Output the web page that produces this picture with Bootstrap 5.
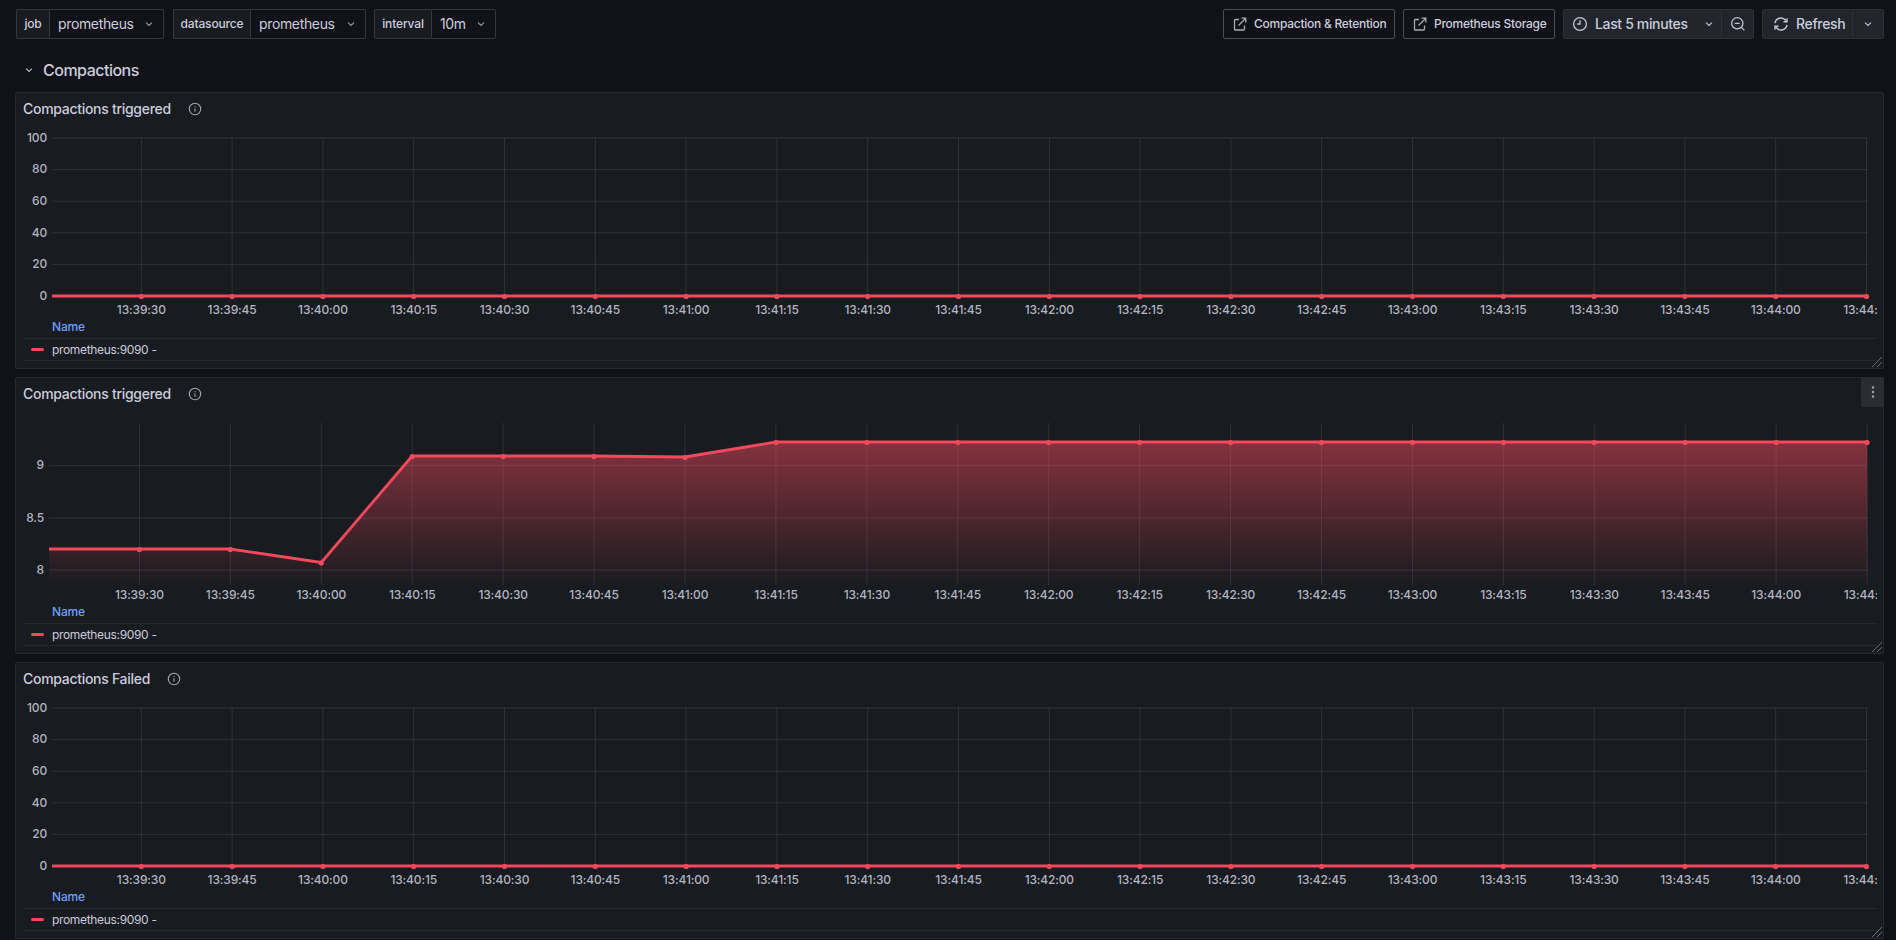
<!doctype html>
<html lang="en" data-bs-theme="dark">
<head>
<meta charset="utf-8">
<title>Compactions</title>
<link href="https://cdn.jsdelivr.net/npm/bootstrap@5.3.0/dist/css/bootstrap.min.css" rel="stylesheet">
<style>
html,body{height:940px;overflow:hidden}
body{background:#111217;color:#ccccdc;font-family:Inter,"Liberation Sans",sans-serif;font-size:12px;line-height:1.3}
.pagewrap{padding:9px 12px 0 15px}
.topbar{height:30px}
.varchip{height:30px}
.chip-a{margin-left:1px}
.chip-b{margin-left:9px}
.chip-c{margin-left:8px}
.varlabel{height:30px;display:flex;align-items:center;justify-content:center;background:#181b1f;border:1px solid #34373d;border-right:0;border-radius:2px 0 0 2px;font-weight:500;font-size:12px;letter-spacing:-.15px;color:#ccccdc}
.varvalue{height:30px;display:flex;align-items:center;justify-content:space-between;padding:0 8px;background:#111217;border:1px solid #34373d;border-radius:0 2px 2px 0;font-size:14px;letter-spacing:-.35px;color:#ccccdc}
.l-job{width:33px}.l-ds{width:77px}.l-int{width:57px}
.w-job{width:115px}.w-ds{width:116px}.w-int{width:65px}
.linkbtn{height:30px;display:flex;align-items:center;gap:6px;padding:0 0 0 8px;border:1px solid #4a4d53;border-radius:2px;background:transparent;color:#ccccdc;font-weight:500;font-size:12px;letter-spacing:-.26px}
.b-comp{width:172px}.b-prom{width:152px}
.toolseg{height:30px;display:flex;align-items:center;background:#22252b;border:1px solid #2e3136;color:#ccccdc;font-size:14px;font-weight:500;letter-spacing:-.35px}
.seg-left{border-radius:2px 0 0 2px;border-right:0}
.seg-right{border-radius:0 2px 2px 0}
.t-main{width:158px;padding-left:8px;gap:7px}
.t-zoom{width:33px}
.r-main{width:90px;padding-left:10px;gap:7px}
.r-drop{width:32px}
.sectionrow{height:30px;margin:16px 0 7px;display:flex;align-items:center;font-size:16px;font-weight:500;letter-spacing:-.5px;color:#ccccdc;padding-left:8px;gap:8px}
.panelbox{position:relative;height:277px;background:#181b1f;border:1px solid #25282d;border-radius:2px;margin-bottom:8px}
.paneltitle{height:32px;display:flex;align-items:center;padding-left:7px;gap:17px;font-size:14px;font-weight:500;letter-spacing:-.29px;color:#ccccdc}
.plot{display:block;width:calc(100% - 6px);height:193px;font-family:Inter,"Liberation Sans",sans-serif;font-size:12px;font-weight:500;letter-spacing:-.15px}
.legendbox{margin:0 6px 0 8px}
.legendhead{height:21px;padding-left:28px;padding-bottom:3px;border-bottom:1px solid #25282d;color:#6e9fff;font-weight:500;display:flex;align-items:center;letter-spacing:-.2px}
.legendrow{height:22px;padding-left:7px;gap:8px;border-bottom:1px solid #25282d;display:flex;align-items:center;letter-spacing:-.33px}
.legendline{width:13px;height:3px;background:#f2495c;border-radius:2px}
.kebab{position:absolute;top:-1px;right:-1px;width:23px;height:30px;background:#2a2d33;border-radius:2px;display:flex;align-items:center;justify-content:center}
.resizer{position:absolute;right:0;bottom:0}
</style>
</head>
<body>
<div class="pagewrap">
  <div class="topbar d-flex align-items-center">
    <div class="varchip chip-a d-flex"><span class="varlabel l-job">job</span><span class="varvalue w-job">prometheus<svg width="12" height="12" viewBox="0 0 12 12"><path d="M3 4.6 6 7.4 9 4.6" fill="none" stroke="#9a9ca5" stroke-width="1.1"/></svg></span></div>
    <div class="varchip chip-b d-flex"><span class="varlabel l-ds">datasource</span><span class="varvalue w-ds">prometheus<svg width="12" height="12" viewBox="0 0 12 12"><path d="M3 4.6 6 7.4 9 4.6" fill="none" stroke="#9a9ca5" stroke-width="1.1"/></svg></span></div>
    <div class="varchip chip-c d-flex"><span class="varlabel l-int">interval</span><span class="varvalue w-int">10m<svg width="12" height="12" viewBox="0 0 12 12"><path d="M3 4.6 6 7.4 9 4.6" fill="none" stroke="#9a9ca5" stroke-width="1.1"/></svg></span></div>
    <div class="ms-auto d-flex align-items-center gap-2">
      <a class="linkbtn b-comp text-decoration-none"><svg width="16" height="16" viewBox="0 0 16 16" fill="none" stroke="#a9abb3" stroke-width="1.3"><path d="M7 3.5H3.6A1.1 1.1 0 0 0 2.5 4.6v8.3A1.1 1.1 0 0 0 3.6 14h7.8a1.1 1.1 0 0 0 1.1-1.1V9.5"/><path d="M6.5 9.5 13.5 2.5M9.5 2.2h4.3v4.3"/></svg>Compaction &amp; Retention</a>
      <a class="linkbtn b-prom text-decoration-none"><svg width="16" height="16" viewBox="0 0 16 16" fill="none" stroke="#a9abb3" stroke-width="1.3"><path d="M7 3.5H3.6A1.1 1.1 0 0 0 2.5 4.6v8.3A1.1 1.1 0 0 0 3.6 14h7.8a1.1 1.1 0 0 0 1.1-1.1V9.5"/><path d="M6.5 9.5 13.5 2.5M9.5 2.2h4.3v4.3"/></svg>Prometheus Storage</a>
      <div class="d-flex">
        <div class="toolseg seg-left t-main"><svg width="16" height="16" viewBox="0 0 16 16" fill="none" stroke="#c4c5cf" stroke-width="1.3"><circle cx="8" cy="8" r="6.4"/><path d="M8 4.2V8H5.2"/></svg>Last 5 minutes<svg class="ms-2" width="12" height="12" viewBox="0 0 12 12"><path d="M3 4.6 6 7.4 9 4.6" fill="none" stroke="#c4c5cf" stroke-width="1.2"/></svg></div>
        <div class="toolseg seg-right t-zoom justify-content-center"><svg width="16" height="16" viewBox="0 0 16 16" fill="none" stroke="#c4c5cf" stroke-width="1.3"><circle cx="7.3" cy="7.3" r="5.6"/><path d="M4.8 7.3h5M11.4 11.4 14.4 14.4"/></svg></div>
      </div>
      <div class="d-flex">
        <div class="toolseg seg-left r-main"><svg width="16" height="16" viewBox="0 0 16 16" fill="none" stroke="#c4c5cf" stroke-width="1.4"><path d="M2 7.2A6 6 0 0 1 12.6 4.2L13.6 5.5M14 8.8A6 6 0 0 1 3.4 11.8L2.4 10.5"/><path d="M14 2.2V5.8H10.5M2 13.8V10.2H5.5"/></svg>Refresh</div>
        <div class="toolseg seg-right r-drop justify-content-center"><svg width="12" height="12" viewBox="0 0 12 12"><path d="M3 4.6 6 7.4 9 4.6" fill="none" stroke="#c4c5cf" stroke-width="1.2"/></svg></div>
      </div>
    </div>
  </div>

  <div class="sectionrow"><svg width="12" height="12" viewBox="0 0 12 12"><path d="M3 4.6 6 7.4 9 4.6" fill="none" stroke="#b5b6c0" stroke-width="1.2"/></svg><span>Compactions</span></div>

  <div class="panelbox">
    <div class="paneltitle"><span>Compactions triggered</span><svg width="14" height="14" viewBox="0 0 14 14" fill="none" stroke="#a4a6ae" stroke-width="1.1"><circle cx="7" cy="7" r="5.7"/><path d="M7 6.5v3.2M7 4.2v1"/></svg></div>
    <svg class="plot" data-kind="zero"></svg>
    <div class="legendbox"><div class="legendhead">Name</div><div class="legendrow"><span class="legendline"></span><span>prometheus:9090 -</span></div></div>
    <svg class="resizer" width="12" height="12" viewBox="0 0 12 12" fill="none" stroke="#6a6c73"><path d="M1 11 11 1M6 11 11 6"/></svg>
  </div>

  <div class="panelbox">
    <div class="paneltitle"><span>Compactions triggered</span><svg width="14" height="14" viewBox="0 0 14 14" fill="none" stroke="#a4a6ae" stroke-width="1.1"><circle cx="7" cy="7" r="5.7"/><path d="M7 6.5v3.2M7 4.2v1"/></svg></div>
    <div class="kebab"><svg width="4" height="14" viewBox="0 0 4 14" fill="#a4a6ae"><circle cx="2" cy="2.5" r="1.2"/><circle cx="2" cy="7" r="1.2"/><circle cx="2" cy="11.5" r="1.2"/></svg></div>
    <svg class="plot" data-kind="area"></svg>
    <div class="legendbox"><div class="legendhead">Name</div><div class="legendrow"><span class="legendline"></span><span>prometheus:9090 -</span></div></div>
    <svg class="resizer" width="12" height="12" viewBox="0 0 12 12" fill="none" stroke="#6a6c73"><path d="M1 11 11 1M6 11 11 6"/></svg>
  </div>

  <div class="panelbox">
    <div class="paneltitle"><span>Compactions Failed</span><svg width="14" height="14" viewBox="0 0 14 14" fill="none" stroke="#a4a6ae" stroke-width="1.1"><circle cx="7" cy="7" r="5.7"/><path d="M7 6.5v3.2M7 4.2v1"/></svg></div>
    <svg class="plot" data-kind="zero"></svg>
    <div class="legendbox"><div class="legendhead">Name</div><div class="legendrow"><span class="legendline"></span><span>prometheus:9090 -</span></div></div>
    <svg class="resizer" width="12" height="12" viewBox="0 0 12 12" fill="none" stroke="#6a6c73"><path d="M1 11 11 1M6 11 11 6"/></svg>
  </div>
</div>

<script>
(function(){
  var NS='http://www.w3.org/2000/svg', GRID='rgba(204,204,220,.13)', RED='#f2495c', LABEL='#b3b4bf';
  var LEFT=16;
  function el(p,n,a,t){var e=document.createElementNS(NS,n);for(var k in a)e.setAttribute(k,a[k]);if(t!=null)e.textContent=t;p.appendChild(e);return e;}
  var ticks=[];
  for(var s=39*60+30,i=0;i<20;i++,s+=15){var m=Math.floor(s/60),ss=s%60;ticks.push('13:'+m+':'+(ss<10?'0':'')+ss);}
  document.querySelectorAll('.plot').forEach(function(svg,idx){
    var top=125+285*idx, area=svg.dataset.kind==='area';
    var x0=area?139.4:141.3, step=area?90.93:90.8, xs=ticks.map(function(_,i){return x0+step*i-LEFT;});
    var y=function(v){return v-top;};
    var start=(area?49:52)-LEFT, end=1867.5-LEFT;
    var pts;
    if(area){
      var d=[549,549,562.5,456,456,456,457,442];
      while(d.length<20)d.push(442);
      pts=xs.map(function(x,i){return [x,y(d[i])];});
      pts.unshift([start,y(549)]);
      [[465.7,'9'],[518,'8.5'],[570,'8']].forEach(function(r){
        el(svg,'line',{x1:start,x2:end,y1:y(r[0]),y2:y(r[0]),stroke:GRID});
        el(svg,'text',{x:44-LEFT,y:y(r[0])+0.5,'text-anchor':'end','dominant-baseline':'middle',fill:LABEL},r[1]);
      });
      xs.forEach(function(x){el(svg,'line',{x1:x,x2:x,y1:y(423),y2:y(585),stroke:GRID});});
      var defs=el(svg,'defs',{});
      var g=el(defs,'linearGradient',{id:'redfade',gradientUnits:'userSpaceOnUse',x1:0,y1:y(442),x2:0,y2:y(585)});
      el(g,'stop',{offset:'0','stop-color':RED,'stop-opacity':'.5'});
      el(g,'stop',{offset:'1','stop-color':RED,'stop-opacity':'.01'});
      var pathA='M'+pts.map(function(p){return p[0].toFixed(1)+' '+p[1].toFixed(1);}).join('L')+'L'+end+' '+y(585)+'L'+start+' '+y(585)+'Z';
      el(svg,'path',{d:pathA,fill:'url(#redfade)'});
    }else{
      var base=top+171;
      [0,20,40,60,80,100].forEach(function(v){
        var yy=base-v*1.58;
        if(v>0)el(svg,'line',{x1:start,x2:end,y1:y(yy),y2:y(yy),stroke:GRID});
        el(svg,'text',{x:47-LEFT,y:y(yy)+0.5,'text-anchor':'end','dominant-baseline':'middle',fill:LABEL},String(v));
      });
      xs.forEach(function(x){el(svg,'line',{x1:x,x2:x,y1:y(base-158),y2:y(base),stroke:GRID});});
      pts=xs.map(function(x){return [x,y(base)];});
      pts.unshift([start,y(base)]);
    }
    el(svg,'polyline',{points:pts.map(function(p){return p.join(',');}).join(' '),fill:'none',stroke:RED,'stroke-width':2.8,'stroke-linejoin':'round'});
    pts.slice(1).forEach(function(p){el(svg,'circle',{cx:p[0],cy:p[1]+0.5,r:2.6,fill:RED});});
    var ly=y(area?595.5:top+185.5);
    ticks.forEach(function(t,i){el(svg,'text',{x:xs[i],y:ly,'text-anchor':'middle','dominant-baseline':'middle',fill:LABEL},t);});
  });
})();
</script>
<script src="https://cdn.jsdelivr.net/npm/bootstrap@5.3.0/dist/js/bootstrap.bundle.min.js"></script>
</body>
</html>
